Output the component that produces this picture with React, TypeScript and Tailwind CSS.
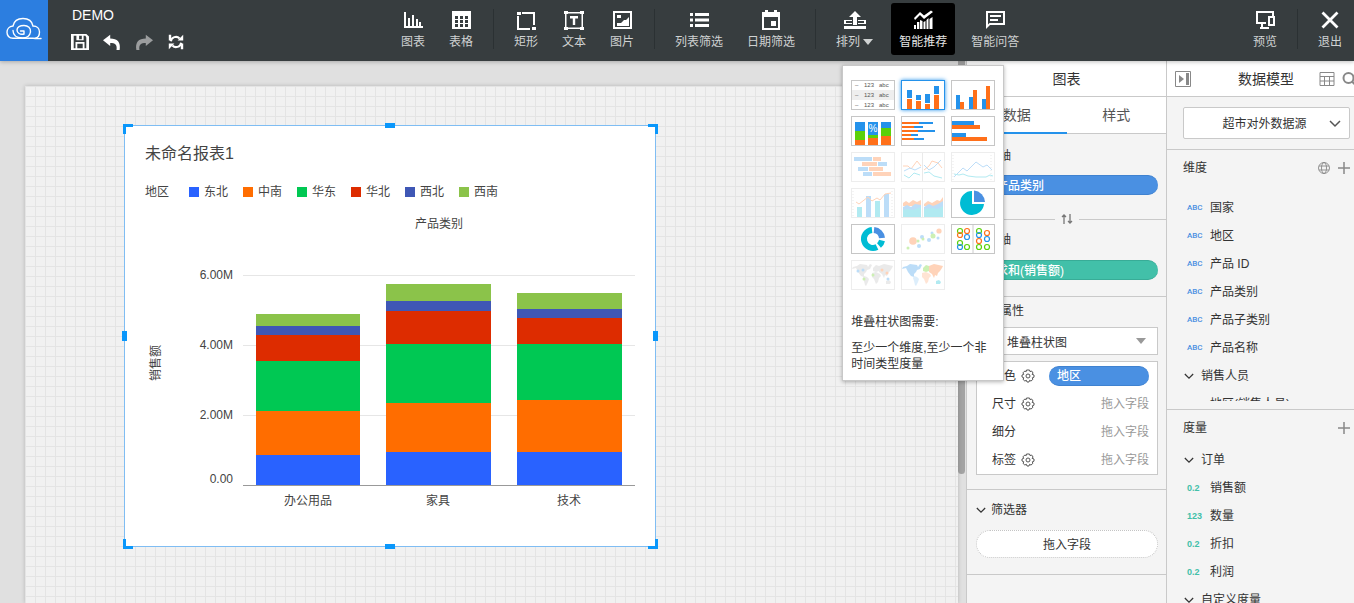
import React, { type ReactNode } from 'react';

/* ---------- toolbar icons ---------- */

function Icon({ children, className = 'h-5 w-5' }: { children: ReactNode; className?: string }) {
  return (
    <svg viewBox="0 0 20 20" className={`${className} shrink-0`} fill="currentColor" aria-hidden="true">
      {children}
    </svg>
  );
}

const ChartIcon = () => (
  <Icon>
    <path d="M1 2h2v14h17v2H1zM5 8h2v9H5zM9 5h2v12H9zM13 9h2v8h-2zM16 12h2v5h-2z" />
  </Icon>
);
const TableIcon = () => (
  <Icon>
    <path
      fillRule="evenodd"
      d="M1 1h19v18H1zM4 6v3h3V6zm5 0v3h3V6zm5 0v3h3V6zM4 10v3h3v-3zm5 0v3h3v-3zm5 0v3h3v-3zM4 14v3h3v-3zm5 0v3h3v-3zm5 0v3h3v-3z"
    />
  </Icon>
);
const RectIcon = () => (
  <Icon>
    <path d="M6 2h13v13h-2V4H6zM1 6h2v12h11v2H1zM1 2h4v3H1zM16 17h4v3h-4z" />
  </Icon>
);
const TextIcon = () => (
  <Icon>
    <path fillRule="evenodd" d="M1 2h18v17H1zM2.500 3.500v14h15v-14z" />
    <path d="M0 1h4v3H0zM16 1h4v3h-4zM0 17h4v3H0zM16 17h4v3h-4zM6 6h8v2.500h-2.800V15H8.800V8.500H6z" />
  </Icon>
);
const ImageIcon = () => (
  <Icon>
    <path fillRule="evenodd" d="M1 1h19v18H1zM3 3v14h15V3z" />
    <path d="M5 5h4v3H5zM5 16v-3h4l3-3h2l3-3v9z" />
  </Icon>
);
const ListIcon = () => (
  <Icon>
    <path d="M1 3h3v3H1zM6 3h14v3H6zM1 8.500h3v3H1zM6 8.500h14v3H6zM1 14h3v3H1zM6 14h14v3H6z" />
  </Icon>
);
const CalendarIcon = () => (
  <Icon>
    <path fillRule="evenodd" d="M1 2h3V0h3v2h6V0h3v2h3v18H1zM3 7v11h14V7zM10 11h5v5h-5z" />
  </Icon>
);
const ArrangeIcon = () => (
  <svg viewBox="0 0 22 20" className="h-5 w-[22px]" fill="currentColor" aria-hidden="true">
    <path d="M11 1l6 6h-4v8H9V7H5zM0 10h8v1H2v2h6v1H0zM14 10h8v4h-8v-1h6v-2h-6zM0 16h22v3H0z" />
  </svg>
);
const SmartIcon = () => (
  <Icon>
    <path d="M1 8l6-6 4 3.500 7-5L20 2l-9 7-4-4-5 5z" />
    <path d="M1 15h2v4H1zM4 12h2.300v7H4zM7 10l2.500 1v8H7zM10.500 12l2-1v8h-2zM13.500 10l2-2v11h-2zM16.500 9l3-2v12h-3z" />
  </Icon>
);
const ChatIcon = () => (
  <Icon>
    <path fillRule="evenodd" d="M1 1h19v14H5l-4 4zM3 3v11.500L4.500 13H18V3zM5 5h11v2H5zM5 9h8v2H5z" />
  </Icon>
);
const PreviewIcon = () => (
  <Icon>
    <path d="M1 1h18v5h-2V3H3v9h8v2H8v3h6v2H5v-2h1v-3H1z" />
    <path fillRule="evenodd" d="M13 6h7v10h-7zM15 8v6h3V8z" />
  </Icon>
);
const ExitIcon = () => (
  <Icon>
    <path d="M2.500 2.500l15 15M17.500 2.500l-15 15" stroke="currentColor" strokeWidth="2.800" />
  </Icon>
);

function CloudLogo() {
  return (
    <svg viewBox="0 0 36 24" className="h-6 w-9" fill="none" stroke="white" strokeWidth="1.400" strokeLinecap="round" aria-hidden="true">
      <path d="M35 21.500c-3 .4-6-.2-8-.2H7c-4 0-6-3-6-6s2-6 6-6.300C8 4 12 1.500 17 1.500S26 4 27 9c4 0 6.500 2.500 6.500 6s-2 6-4.500 6.300" />
      <path d="M18 14h-3.500M18 14v3c-4 1-7-1-7-4s3-4.500 7-4.500 7 2.500 6.500 6.500c-.5 3-3 6-8 6-6 0-9.500-3-9.500-7.500" />
    </svg>
  );
}

/* ---------- header ---------- */

function Tool({ icon, label, arrow, active }: { icon: ReactNode; label: string; arrow?: boolean; active?: boolean }) {
  return (
    <button
      type="button"
      className={`flex h-[52px] flex-col items-center rounded-[3px] px-2 pt-[7px] text-xs leading-4 ${
        active ? 'bg-black text-[#e4e4e4]' : 'text-[#cfd2d2]'
      }`}
    >
      <span className="text-white">{icon}</span>
      <span className="mt-1 flex items-center gap-[3px] whitespace-nowrap">
        {label}
        {arrow && <span className="border-x-[5px] border-t-[6px] border-x-transparent border-t-[#cfd2d2]" />}
      </span>
    </button>
  );
}

const Separator = () => <div className="mx-2 mt-[6px] h-10 w-px shrink-0 bg-[#2b3133]" />;

function Header() {
  return (
    <header className="relative z-20 flex h-[61px] shrink-0 bg-[#373d3f] shadow-[0_1px_4px_rgba(0,0,0,0.25)]">
      <a href="#home" aria-label="首页" className="flex w-12 shrink-0 items-center justify-center bg-[#2c7ee0] pb-1">
        <CloudLogo />
      </a>
      <div className="flex w-[341px] shrink-0 flex-col pl-6 pt-[5px] text-white">
        <h1 className="text-sm leading-5">DEMO</h1>
        <div className="mt-[7px] flex gap-4">
          <button type="button" aria-label="保存" className="w-4">
            <Icon className="-ml-px h-5 w-[18px]">
              <path fillRule="evenodd" d="M0 1h17l3 3v15H0zM3 3v14h2v-7h10v7h2V5l-1-2h-2v5H6V3zM9 3h3v4H9zM7 12v5h6v-5z" />
            </Icon>
          </button>
          <button type="button" aria-label="撤销" className="w-4">
            <Icon className="-ml-px h-5 w-[18px]">
              <path d="M0 8l8-6v4c8 0 12 4 10.500 13H15c1-6-1.500-8-7-8v3.500z" />
            </Icon>
          </button>
          <button type="button" aria-label="重做" className="w-4 text-[#9b9d9e]">
            <Icon className="-ml-px h-5 w-[18px]">
              <path d="M20 8l-8-6v4C4 6 0 10 1.500 19H5c-1-6 1.500-8 7-8v3.500z" />
            </Icon>
          </button>
          <button type="button" aria-label="刷新" className="w-4">
            <Icon className="h-5 w-4">
              <path d="M3.500 9a6.500 6.500 0 0 1 11-3.500M16.500 11a6.500 6.500 0 0 1-11 3.500" fill="none" stroke="currentColor" strokeWidth="2.600" />
              <path d="M19 1v7h-7zM1 19v-7h7zM1 1h3v7H1zM16 12h3v7h-3z" />
            </Icon>
          </button>
        </div>
      </div>
      <nav className="flex items-start pt-[3px]">
        <div className="flex gap-2 px-1">
          <Tool icon={<ChartIcon />} label="图表" />
          <Tool icon={<TableIcon />} label="表格" />
        </div>
        <Separator />
        <div className="flex gap-2 px-1">
          <Tool icon={<RectIcon />} label="矩形" />
          <Tool icon={<TextIcon />} label="文本" />
          <Tool icon={<ImageIcon />} label="图片" />
        </div>
        <Separator />
        <div className="flex gap-2 px-1">
          <Tool icon={<ListIcon />} label="列表筛选" />
          <Tool icon={<CalendarIcon />} label="日期筛选" />
        </div>
        <Separator />
        <div className="flex px-1">
          <Tool icon={<ArrangeIcon />} label="排列" arrow />
          <div className="relative ml-[10px] mr-2">
            <Tool icon={<SmartIcon />} label="智能推荐" active />
            <RecommendMenu />
          </div>
          <Tool icon={<ChatIcon />} label="智能问答" />
        </div>
      </nav>
      <div className="ml-auto flex items-start pt-[3px]">
        <div className="px-1">
          <Tool icon={<PreviewIcon />} label="预览" />
        </div>
        <Separator />
        <div className="px-1">
          <Tool icon={<ExitIcon />} label="退出" />
        </div>
      </div>
    </header>
  );
}

/* ---------- chart recommendation menu ---------- */

const BLUE = '#2492eb';
const ORANGE = '#ff701a';
const GREEN = '#5bd10a';
const CYAN = '#00bcd4';
const ROYAL = '#4a90e2';

type Box = [number, number, number, number, string];
const Boxes = ({ items }: { items: Box[] }) => (
  <>
    {items.map(([x, y, w, h, fill], i) => (
      <rect key={i} x={x} y={y} width={w} height={h} fill={fill} />
    ))}
  </>
);

type Dot = [number, number, number, string];

const rings: Dot[] = [
  [8, 6, 2.5, GREEN], [15, 6, 2.5, ORANGE], [8, 10, 2.5, ORANGE], [15, 12, 2.5, BLUE], [8, 18, 2.5, GREEN], [8, 22, 2.5, BLUE], [15, 22, 2.5, GREEN],
  [27, 6, 2.5, GREEN], [27, 10, 2.5, BLUE], [35, 8, 2.5, ORANGE], [27, 16, 2.5, ORANGE], [35, 14, 2.5, BLUE], [27, 22, 2.5, GREEN], [35, 22, 2.5, GREEN],
];
const bubbles: Dot[] = [
  [6, 23, 1.5, GREEN], [11, 16, 3.8, ORANGE], [16, 16, 1.5, GREEN], [17, 21, 2, BLUE], [20, 12, 2, BLUE], [21, 14, 1.5, GREEN],
  [27, 15, 2, BLUE], [30, 8, 1.5, BLUE], [31, 11, 2.5, GREEN], [37, 6, 2.6, ORANGE], [36, 13, 1.5, BLUE],
];

function WorldMap({ fills }: { fills: [string, string, string, string, string, string] }) {
  return (
    <>
      <path fill={fills[0]} d="M1 6l4-1 3-2 7 1 1 2 2-3 2 1-2 4-3 1-1 2-2 2v3l-3-1-3-4-2-4-4 1z" />
      <path fill={fills[1]} d="M12 15l3 1 2 2-1 3-2 4-1-1-1-4-1-3z" />
      <path fill={fills[2]} d="M21 7l3-3 3 1v5l-3 1-3-1z" />
      <path fill={fills[3]} d="M20 12l4-1 4 2 1 2-2 2-1 4-2 2-2-5-2-2z" />
      <path fill={fills[4]} d="M27 5l5-2 9 2-1 2-2 3-2 2-1 3-2-1-1 3-2-4-3-2z" />
      <path fill={fills[5]} d="M34 20l3-1 2 2-1 2h-4z" />
    </>
  );
}

const drawings: { name: string; faded?: boolean; selected?: boolean; art: ReactNode }[] = [
  {
    name: '明细表',
    art: (
      <>
        <rect y="9" width="42" height="10" fill="#eee" />
        {[6, 16, 26].map((y) => (
          <g key={y} fontSize="6" fill="#555">
            <text x="3" y={y}>–</text>
            <text x="12" y={y}>123</text>
            <text x="27" y={y}>abc</text>
          </g>
        ))}
      </>
    ),
  },
  {
    name: '堆叠柱状图',
    selected: true,
    art: <Boxes items={[[5, 9, 5, 8, BLUE], [5, 18, 5, 10, ORANGE], [14, 14, 5, 5, BLUE], [14, 20, 5, 8, ORANGE], [23, 13, 5, 9, BLUE], [23, 23, 5, 5, ORANGE], [32, 5, 5, 8, BLUE], [32, 14, 5, 14, ORANGE]]} />,
  },
  {
    name: '对比柱状图',
    art: <Boxes items={[[4, 14, 4, 14, BLUE], [8, 21, 4, 7, ORANGE], [17, 16, 4, 12, BLUE], [21, 9, 4, 19, ORANGE], [30, 18, 4, 10, BLUE], [34, 5, 4, 23, ORANGE]]} />,
  },
  {
    name: '百分比堆叠柱状图',
    art: (
      <>
        <Boxes items={[[3, 5, 10, 9, BLUE], [3, 14, 10, 9, GREEN], [3, 23, 10, 5, ORANGE], [16, 5, 10, 13, BLUE], [16, 18, 10, 3, GREEN], [16, 21, 10, 7, ORANGE], [29, 5, 10, 6, BLUE], [29, 11, 10, 8, GREEN], [29, 19, 10, 9, ORANGE]]} />
        <text x="21" y="15" fontSize="10" fill="white" textAnchor="middle">%</text>
      </>
    ),
  },
  {
    name: '堆叠条形图',
    art: <Boxes items={[[0, 5, 17, 2, ORANGE], [17, 5, 14, 2, BLUE], [0, 9, 12, 2, ORANGE], [12, 9, 9, 2, BLUE], [0, 13, 16, 2, ORANGE], [16, 13, 17, 2, BLUE], [0, 17, 9, 2, ORANGE], [9, 17, 7, 2, BLUE], [0, 21, 12, 2, ORANGE], [12, 21, 10, 2, BLUE]]} />,
  },
  {
    name: '对比条形图',
    art: <Boxes items={[[0, 4, 22, 4, BLUE], [0, 8, 28, 4, ORANGE], [0, 16, 14, 4, BLUE], [0, 20, 35, 4, ORANGE]]} />,
  },
  {
    name: '百分比条形图',
    faded: true,
    art: <Boxes items={[[2, 4, 18, 4, BLUE], [21, 4, 8, 4, ORANGE], [10, 9, 15, 4, ORANGE], [26, 9, 9, 4, BLUE], [6, 14, 10, 4, BLUE], [17, 14, 14, 4, ORANGE], [11, 19, 9, 4, BLUE], [21, 19, 18, 4, ORANGE]]} />,
  },
  {
    name: '多折线图',
    faded: true,
    art: (
      <g fill="none" strokeWidth="1">
        <path stroke="#bbb" d="M20.500 0v28" />
        <path stroke={ORANGE} d="M1 13h5l3 3 6-8 4 5M22 17l5-4 3-5 6 2 4 5" />
        <path stroke={BLUE} d="M2 18l6-3 5 2 6-3M22 12l5 5 5-3 7-7" />
        <path stroke={CYAN} d="M2 22l5 3 5-5 6 2M22 20l5-1 5 4 8 2" />
      </g>
    ),
  },
  {
    name: '折线图',
    faded: true,
    art: (
      <g fill="none" strokeWidth="1">
        <path stroke="#bbb" strokeDasharray="1 2" d="M1 2v26M39 2v26" />
        <path stroke={BLUE} d="M2 24l9-9 4 3 9-9 7 5 4-2 5 5" />
        <path stroke={CYAN} d="M2 21l5 1 4-1 5 2 8 1h10l4-2 3 1" />
      </g>
    ),
  },
  {
    name: '组合图',
    faded: true,
    art: (
      <>
        <path stroke="#bbb" strokeDasharray="1 2" d="M1 2v26M40 2v26" fill="none" />
        <Boxes items={[[5, 18, 5, 10, CYAN], [14, 7, 5, 21, BLUE], [23, 12, 5, 16, CYAN], [32, 5, 5, 23, BLUE]]} />
        <path d="M4 13l3 2 9-7 4 4 5-3 3 2 5-6 6-1" stroke={ORANGE} fill="none" />
      </>
    ),
  },
  {
    name: '面积图',
    faded: true,
    art: (
      <>
        <path fill={ORANGE} d="M1 14l3-2 3 2 4-3 4 2 4-2v6H1zM22 15l4-3 4 2 5-3 3 1 3-4v9H22z" />
        <path fill={BLUE} d="M1 18l4-2 4 2 4-3 6 1v7H1zM22 18l5-3 4 2 5-2 5-3v9H22z" />
        <path fill={CYAN} d="M1 21l5-1 5 1 8-3v10H1zM22 20l8-1 6 1 5-3v11H22z" />
        <path stroke="#bbb" d="M20.500 0v28" />
      </>
    ),
  },
  {
    name: '饼图',
    art: (
      <>
        <path fill={CYAN} d="M20 2a12 12 0 1 0 12 13H20z" />
        <path fill={ROYAL} d="M22 1.500a12 12 0 0 1 11 11.500H22z" />
      </>
    ),
  },
  {
    name: '环形图',
    art: (
      <>
        <path d="M22 5a9 9 0 0 1 8 8" stroke={ROYAL} strokeWidth="6" fill="none" />
        <path d="M30 15.500a9 9 0 0 1-3 5" stroke={CYAN} strokeWidth="6" fill="none" />
        <path d="M20 5a9 9 0 1 0 5 17" stroke={CYAN} strokeWidth="6" fill="none" />
      </>
    ),
  },
  {
    name: '散点图',
    faded: true,
    art: bubbles.map(([x, y, r, c]) => <circle key={`${x}-${y}`} cx={x} cy={y} r={r} fill={c} />),
  },
  {
    name: '矩阵气泡图',
    art: (
      <>
        <path stroke="#ccc" d="M21 0v28" />
        {rings.map(([x, y, r, c]) => (
          <circle key={`${x}-${y}`} cx={x} cy={y} r={r} fill="none" stroke={c} strokeWidth="1.200" />
        ))}
      </>
    ),
  },
  {
    name: '气泡地图',
    faded: true,
    art: (
      <>
        <WorldMap fills={['#bbb', '#bbb', '#bbb', '#bbb', '#bbb', '#bbb']} />
        <circle cx="6" cy="10" r="1.500" fill={BLUE} />
        <circle cx="11" cy="9" r="1.500" fill={BLUE} />
        <circle cx="21" cy="14" r="1.500" fill={GREEN} />
        <circle cx="12" cy="18" r="1.500" fill={GREEN} />
        <circle cx="30" cy="9" r="1.500" fill={ORANGE} />
        <circle cx="35" cy="12" r="1.500" fill={ORANGE} />
        <circle cx="36" cy="18" r="1.500" fill={BLUE} />
      </>
    ),
  },
  {
    name: '填充地图',
    faded: true,
    art: <WorldMap fills={['#2492eb', '#90c8f5', '#5bd10a', '#ffa873', '#ff701a', '#00bcd4']} />,
  },
];

function RecommendMenu() {
  return (
    <section
      aria-label="智能推荐"
      className="absolute -left-[49px] top-[62px] w-[162px] border border-[#c8c8c8] bg-white px-2 pb-2 pt-[14px] text-xs text-[#333] shadow-[0_1px_4px_rgba(0,0,0,0.3)]"
    >
      <div className="grid grid-cols-[repeat(3,44px)] gap-[6px]">
        {drawings.map((d) => (
          <button
            key={d.name}
            type="button"
            aria-label={d.name}
            disabled={d.faded}
            className={`h-[30px] w-11 border bg-white ${
              d.selected ? 'border-[#2492eb] shadow-[0_0_4px_#2492eb]' : d.faded ? 'border-[#c6c6c6] opacity-30' : 'border-[#c6c6c6]'
            }`}
          >
            <svg viewBox="0 0 42 28" className="block h-7 w-[42px]" aria-hidden="true">
              {d.art}
            </svg>
          </button>
        ))}
      </div>
      <p className="mt-6 leading-4">堆叠柱状图需要:</p>
      <p className="mt-[10px] leading-4">至少一个维度,至少一个非时间类型度量</p>
    </section>
  );
}

/* ---------- canvas ---------- */

const series = [
  { name: '东北', swatch: 'bg-[#2962ff]', fill: '#2962ff' },
  { name: '中南', swatch: 'bg-[#ff6d00]', fill: '#ff6d00' },
  { name: '华东', swatch: 'bg-[#00c853]', fill: '#00c853' },
  { name: '华北', swatch: 'bg-[#dd2c00]', fill: '#dd2c00' },
  { name: '西北', swatch: 'bg-[#3f57b5]', fill: '#3f57b5' },
  { name: '西南', swatch: 'bg-[#8bc34a]', fill: '#8bc34a' },
];

/* segment heights from the baseline upward, 35px per million */
const bars = [
  { name: '办公用品', x: 111, w: 104, heights: [30, 44, 50, 26, 9, 12] },
  { name: '家具', x: 241, w: 105, heights: [33, 49, 59, 33, 10, 17] },
  { name: '技术', x: 372, w: 105, heights: [33, 52, 56, 26, 9, 16] },
];

function StackedChart() {
  return (
    <svg viewBox="0 0 490 260" className="block h-[260px] w-full" fontSize="12" fill="#444" role="img" aria-label="销售额">
      {[25, 95, 165].map((y) => (
        <rect key={y} x="98" y={y} width="392" height="1" fill="#e6e6e6" />
      ))}
      <g textAnchor="end">
        <text x="88" y="29">6.00M</text>
        <text x="88" y="99">4.00M</text>
        <text x="88" y="169">2.00M</text>
        <text x="88" y="233">0.00</text>
      </g>
      <text transform="translate(15 113) rotate(-90)" textAnchor="middle">销售额</text>
      {bars.map((bar) => {
        let y = 235;
        return (
          <g key={bar.name}>
            {bar.heights.map((h, i) => {
              y -= h;
              return <rect key={i} x={bar.x} y={y} width={bar.w} height={h} fill={series[i].fill} />;
            })}
            <text x={bar.x + 52} y="255" textAnchor="middle">{bar.name}</text>
          </g>
        );
      })}
      <rect x="98" y="235" width="392" height="1" fill="#999" />
    </svg>
  );
}

function Handles() {
  return (
    <>
      <span className="absolute -left-[2px] -top-[2px] h-[10px] w-[10px] border-l-[3px] border-t-[3px] border-[#0a97fb]" />
      <span className="absolute -right-[3px] -top-[2px] h-[10px] w-[10px] border-r-[3px] border-t-[3px] border-[#0a97fb]" />
      <span className="absolute -bottom-[3px] -left-[2px] h-[10px] w-[10px] border-b-[3px] border-l-[3px] border-[#0a97fb]" />
      <span className="absolute -bottom-[3px] -right-[3px] h-[10px] w-[10px] border-b-[3px] border-r-[3px] border-[#0a97fb]" />
      <span className="absolute -top-[3px] left-1/2 h-[5px] w-[10px] -translate-x-1/2 bg-[#0a97fb]" />
      <span className="absolute -bottom-[3px] left-1/2 h-[5px] w-[10px] -translate-x-1/2 bg-[#0a97fb]" />
      <span className="absolute -left-[3px] top-1/2 h-[10px] w-[5px] -translate-y-1/2 bg-[#0a97fb]" />
      <span className="absolute -right-[3px] top-1/2 h-[10px] w-[5px] -translate-y-1/2 bg-[#0a97fb]" />
    </>
  );
}

function Canvas() {
  return (
    <main className="flex min-w-0 flex-1 bg-[#e0e0e0]">
      <div className="flex min-w-0 flex-1 pl-[25px] pt-[25px]">
        <div className="relative flex-1 overflow-hidden bg-[#f1f1f1] bg-[linear-gradient(#e4e4e4_1px,transparent_1px),linear-gradient(90deg,#e4e4e4_1px,transparent_1px)] bg-[size:10px_10px] shadow-[0_0_4px_rgba(0,0,0,0.2)]">
          <article className="absolute left-[99px] top-[39px] w-[532px] border border-[#7fbdf3] bg-white px-5 pb-9 pt-[18px] text-[#444]">
            <Handles />
            <h2 className="text-base leading-5">未命名报表1</h2>
            <div className="mt-5 flex text-xs leading-4">
              <span className="w-11">地区</span>
              <ul className="flex gap-[15px]">
                {series.map((s) => (
                  <li key={s.name} className="flex items-center gap-[5px]">
                    <span className={`h-[10px] w-[10px] ${s.swatch}`} />
                    {s.name}
                  </li>
                ))}
              </ul>
            </div>
            <p className="mb-[18px] ml-[98px] mt-4 text-center text-xs leading-4">产品类别</p>
            <StackedChart />
          </article>
        </div>
      </div>
      <div className="w-2 shrink-0 bg-[#e0e0e0] pr-px">
        <div className="h-[413px] rounded-b bg-[#a3a3a3]" />
      </div>
    </main>
  );
}

/* ---------- chart panel ---------- */

function Gear() {
  return (
    <svg viewBox="0 0 14 14" className="h-[14px] w-[14px]" fill="none" stroke="#555" aria-hidden="true">
      <path d="M5.500 1h3l.5 1.600 1.600-.6 1.500 2-1 1.300L13 6v2.200l-1.700.6.6 1.500-1.900 1.800-1.400-.8L8 13H6l-.6-1.700-1.600.7L2 10.300l.8-1.500L1 8V6l1.700-.6L2 3.800 3.800 2l1.400.6z" />
      <circle cx="7" cy="7" r="2" />
    </svg>
  );
}

function ChevronDown({ className }: { className: string }) {
  return (
    <svg viewBox="0 0 12 8" className={className} fill="none" stroke="currentColor" aria-hidden="true">
      <path d="M1 1l5 5 5-5" strokeWidth="1.500" />
    </svg>
  );
}

const attributes = [
  { label: '颜色', gear: true, value: '地区' },
  { label: '尺寸', gear: true },
  { label: '细分' },
  { label: '标签', gear: true },
];

function ChartPanel() {
  return (
    <aside className="w-[200px] shrink-0 border-l border-[#c9c9c9] bg-[#f4f4f4] text-xs leading-4 text-[#333]">
      <h2 className="h-9 border-b border-[#c9c9c9] bg-white text-center text-sm leading-9">图表</h2>
      <div className="flex h-[37px] border-b border-[#c9c9c9] bg-white text-sm leading-9 text-[#555]">
        <button type="button" className="h-[37px] w-1/2 border-b-2 border-[#2492eb] leading-9">数据</button>
        <button type="button" className="h-9 w-1/2">样式</button>
      </div>
      <div className="pl-[9px] pr-2 pt-[14px]">
        <h3 className="pl-[15px]">X轴</h3>
        <div className="mt-[11px] h-5 rounded-full border-y border-[#3f82d0] bg-[#4a90e2] pl-5 font-medium leading-5 text-white">产品类别</div>
      </div>
      <div className="mt-4 flex h-4 items-center text-[#777]">
        <span className="h-px flex-1 bg-[#c9c9c9]" />
        <button type="button" aria-label="交换坐标轴" className="flex w-6 justify-center">
          <svg viewBox="0 0 14 12" className="h-3 w-[14px]" fill="none" stroke="currentColor" strokeWidth="1.300" aria-hidden="true">
            <path d="M4 11V2M2 4l2-2 2 2M10 1v9M8 8l2 2 2-2" />
          </svg>
        </button>
        <span className="h-px flex-1 bg-[#c9c9c9]" />
      </div>
      <div className="border-b border-[#c9c9c9] pb-4 pl-[9px] pr-2 pt-[5px]">
        <h3 className="pl-[15px]">Y轴</h3>
        <div className="mt-3 h-5 rounded-full border-y border-[#38ac97] bg-[#42c0a9] pl-5 font-medium leading-5 text-white">求和(销售额)</div>
      </div>
      <div className="border-b border-[#c9c9c9] pb-[14px] pl-[9px] pr-2 pt-[6px]">
        <h3 className="pl-6">属性</h3>
        <div className="relative mt-2">
          <select
            aria-label="图表类型"
            defaultValue="堆叠柱状图"
            className="h-7 w-full appearance-none border border-[#c9c9c9] bg-white pl-[30px] pt-[3px] leading-4"
          >
            <option>堆叠柱状图</option>
          </select>
          <span className="pointer-events-none absolute right-3 top-[11px] border-x-[5px] border-t-[6px] border-x-transparent border-t-[#999]" />
        </div>
        <ul className="mt-[6px] border border-[#c9c9c9] bg-white pl-[15px] pr-2">
          {attributes.map((a) => (
            <li key={a.label} className="flex h-7 items-center">
              <span className="mr-[5px]">{a.label}</span>
              {a.gear && (
                <button type="button" aria-label={`${a.label}设置`}>
                  <Gear />
                </button>
              )}
              {a.value ? (
                <span className="ml-auto h-5 w-[100px] rounded-full border-y border-[#3f82d0] bg-[#4a90e2] pl-2 font-medium leading-[18px] text-white">
                  {a.value}
                </span>
              ) : (
                <span className="ml-auto text-[#999]">拖入字段</span>
              )}
            </li>
          ))}
        </ul>
      </div>
      <div className="border-b border-[#c9c9c9] pb-4 pl-[9px] pr-2 pt-3">
        <h3 className="flex items-center gap-[5px]">
          <ChevronDown className="h-[7px] w-[10px]" />
          筛选器
        </h3>
        <div className="mt-3 h-7 rounded-full border border-dotted border-[#c4c4c4] bg-white text-center leading-7">拖入字段</div>
      </div>
    </aside>
  );
}

/* ---------- data model panel ---------- */

function PlusIcon() {
  return (
    <svg viewBox="0 0 12 12" className="h-3 w-3" stroke="#888" strokeWidth="1.500" aria-hidden="true">
      <path d="M6 0v12M0 6h12" />
    </svg>
  );
}

function Field({ tag, name, measure }: { tag: string; name: string; measure?: boolean }) {
  return (
    <li className="flex h-7 items-center pl-5">
      <span
        className={
          measure
            ? 'w-[23px] text-[9px] font-bold leading-4 text-[#42c0a9]'
            : 'w-[23px] font-[Roboto,sans-serif] text-[8px] font-medium leading-4 text-[#4a90e2]'
        }
      >
        {tag}
      </span>
      {name}
    </li>
  );
}

function Group({ name }: { name: string }) {
  return (
    <li className="flex h-7 items-center gap-[7px] pl-[17px]">
      <ChevronDown className="h-[7px] w-[10px]" />
      {name}
    </li>
  );
}

function DataPanel() {
  return (
    <aside className="flex w-[188px] shrink-0 flex-col overflow-hidden border-l border-[#c9c9c9] bg-[#f4f4f4] text-xs leading-4 text-[#333]">
      <div className="flex h-9 shrink-0 items-center border-b border-[#c9c9c9] bg-white pl-2">
        <button type="button" aria-label="收起">
          <svg viewBox="0 0 16 16" className="h-4 w-4" fill="#888" aria-hidden="true">
            <path d="M.5.500h15v15H.500z" fill="none" stroke="#888" />
            <path d="M4 4l5 4-5 4zM11 2h3v12h-3z" />
          </svg>
        </button>
        <h2 className="flex-1 pl-[26px] text-center text-sm">数据模型</h2>
        <button type="button" aria-label="表格视图" className="ml-1">
          <svg viewBox="0 0 16 16" className="h-4 w-4" fill="none" stroke="#888" aria-hidden="true">
            <path d="M1 1.500h14v13H1zM1 5.500h14M1 10h14M5.500 6v9M10.500 6v9" />
          </svg>
        </button>
        <button type="button" aria-label="搜索" className="-mr-1 ml-[7px]">
          <svg viewBox="0 0 16 16" className="h-4 w-4" fill="none" stroke="#888" strokeWidth="2" aria-hidden="true">
            <circle cx="6.500" cy="7" r="5" />
            <path d="M10 10.500l4 4" />
          </svg>
        </button>
      </div>
      <div className="relative shrink-0 border-b border-[#c9c9c9] pb-[10px] pl-4 pr-1 pt-[10px] text-[#555]">
        <select
          aria-label="数据源"
          defaultValue="超市对外数据源"
          className="h-8 w-full appearance-none rounded-[2px] border border-[#c9c9c9] bg-white pr-1 pt-[2px] text-center leading-4 text-[#333] [text-align-last:center]"
        >
          <option>超市对外数据源</option>
        </select>
        <ChevronDown className="pointer-events-none absolute right-[13px] top-[23px] h-2 w-3" />
      </div>
      <section className="flex h-[260px] shrink-0 flex-col border-b border-[#c9c9c9] pb-2">
        <div className="flex h-9 shrink-0 items-center pl-4 pr-1">
          <h3>维度</h3>
          <button type="button" aria-label="地理角色" className="ml-auto mr-2">
            <svg viewBox="0 0 12 12" className="h-3 w-3" fill="none" stroke="#888" strokeWidth=".9" aria-hidden="true">
              <circle cx="6" cy="6" r="5.500" />
              <ellipse cx="6" cy="6" rx="2.500" ry="5.500" />
              <path d="M1 4h10M1 8h10" />
            </svg>
          </button>
          <button type="button" aria-label="添加维度"><PlusIcon /></button>
        </div>
        <ul className="mt-2 min-h-0 flex-1 overflow-hidden">
          <Field tag="ABC" name="国家" />
          <Field tag="ABC" name="地区" />
          <Field tag="ABC" name="产品 ID" />
          <Field tag="ABC" name="产品类别" />
          <Field tag="ABC" name="产品子类别" />
          <Field tag="ABC" name="产品名称" />
          <Group name="销售人员" />
          <Field tag="ABC" name="地区(销售人员)" />
        </ul>
      </section>
      <section className="min-h-0 flex-1 overflow-hidden">
        <div className="flex h-9 items-center pl-4 pr-1">
          <h3>度量</h3>
          <button type="button" aria-label="添加度量" className="ml-auto"><PlusIcon /></button>
        </div>
        <ul>
          <Group name="订单" />
          <Field measure tag="0.2" name="销售额" />
          <Field measure tag="123" name="数量" />
          <Field measure tag="0.2" name="折扣" />
          <Field measure tag="0.2" name="利润" />
          <Group name="自定义度量" />
        </ul>
      </section>
    </aside>
  );
}

export default function App() {
  return (
    <div className="flex h-screen flex-col overflow-hidden font-['Liberation_Sans','Noto_Sans_CJK_SC',sans-serif]">
      <Header />
      <div className="flex min-h-0 flex-1">
        <Canvas />
        <ChartPanel />
        <DataPanel />
      </div>
    </div>
  );
}
